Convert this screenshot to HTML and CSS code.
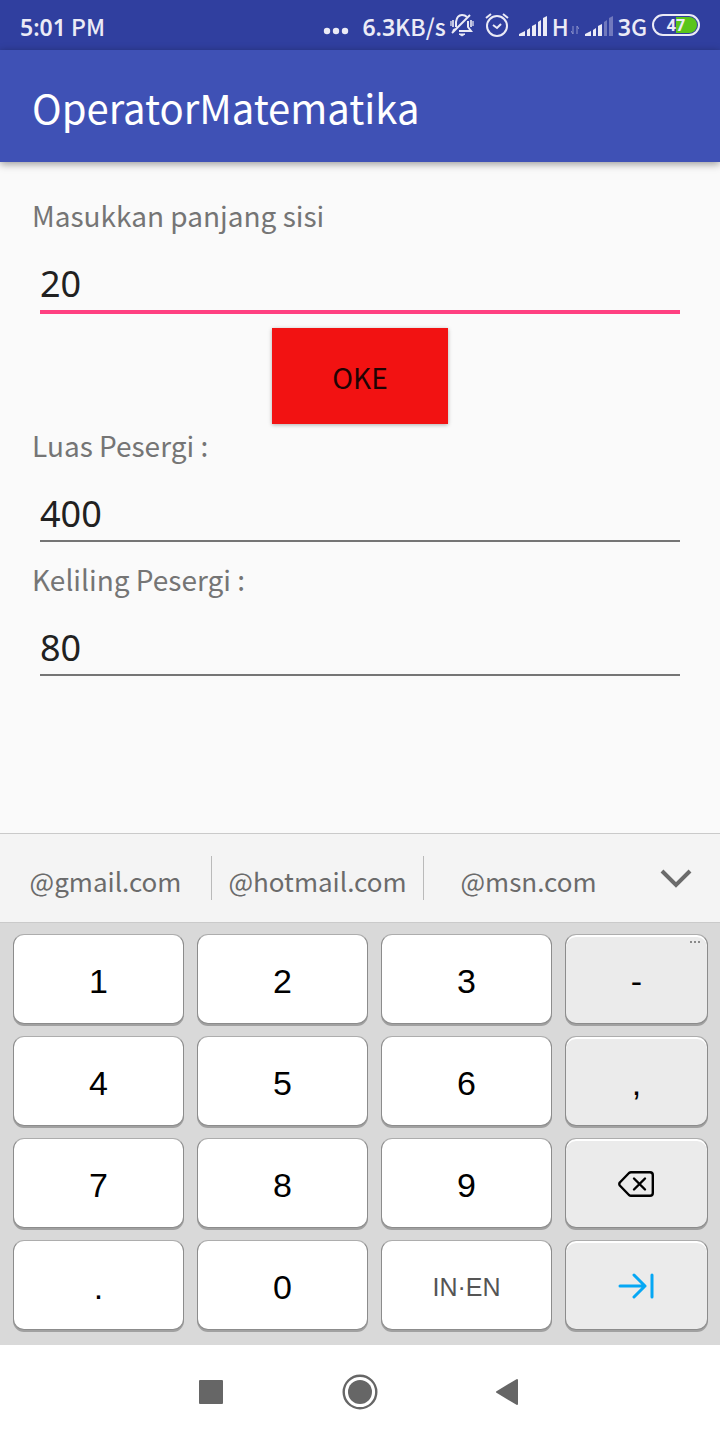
FILE: index.html
```html
<!DOCTYPE html>
<html lang="id">
<head>
<meta charset="utf-8">
<meta name="viewport" content="width=device-width, initial-scale=1">
<title>OperatorMatematika</title>
<link rel="stylesheet" href="styles.css">
</head>
<body>
<div class="screen">
  <div class="status">
    <span class="clock"><span class="digits">5:01</span> PM</span>
    <svg class="dots" width="26" height="8" viewBox="0 0 26 8" fill="#ebebf6"><circle cx="4" cy="4" r="3.2"/><circle cx="13" cy="4" r="3.2"/><circle cx="22" cy="4" r="3.2"/></svg>
    <span class="speed"><span class="digits">6.3</span>KB/s</span>
    <svg class="bell" width="24" height="24" viewBox="0 0 24 24" fill="none" stroke="#ebebf6" stroke-width="2"><path d="M6 14V9Q7 2 12 2Q15 2 17 4M18 8V14L21 18H9M3 18L5 16"/><path d="M20 2L2 20"/><path d="M9 21H15L12 23Z" fill="#ebebf6" stroke-width="1"/><path d="M3 7V14M21 7V14" stroke-width="1.6"/><path d="M1 8V13M23 8V13" stroke-width="1.2"/></svg>
    <svg class="alarm" width="24" height="24" viewBox="0 0 24 24" fill="none" stroke="#ebebf6" stroke-width="2"><circle cx="12" cy="13" r="10"/><path d="M8 12L12 15L16 11"/><path d="M1 5L6 1M23 5L18 1"/></svg>
    <svg class="signal" width="28" height="20" viewBox="0 0 28 20" fill="#ebebf6"><path d="M0 20V18L6 15V20ZM8 14L11 12V20H8ZM13 10L17 8V20H13ZM19 6L22 4V20H19ZM24 2L28 0V20H24Z"/></svg>
    <span class="net">H</span>
    <svg class="data" width="8" height="10" viewBox="0 0 8 10" fill="none" stroke="#8d94cc"><path d="M2 1V9L0 6M6 9V1L8 4"/></svg>
    <svg class="signal" width="28" height="20" viewBox="0 0 28 20" fill="#ebebf6"><path d="M0 20V18L6 15V20ZM8 14L11 12V20H8ZM13 10L17 8V20H13Z"/><path fill="#7179bd" d="M19 6L22 4V20H19ZM24 2L28 0V20H24Z"/></svg>
    <span class="net"><span class="digits">3</span>G</span>
    <span class="battery">47</span>
  </div>

  <header class="appbar"><h1>OperatorMatematika</h1></header>

  <main class="content">
    <form class="form">
      <label for="side">Masukkan panjang sisi</label>
      <input class="focused" id="side" type="text" inputmode="decimal" value="20">
      <button class="ok" type="button">OKE</button>
      <label for="area">Luas Pesergi :</label>
      <input id="area" type="text" value="400">
      <label for="perimeter">Keliling Pesergi :</label>
      <input id="perimeter" type="text" value="80">
    </form>
  </main>

  <section class="keyboard" aria-label="Keyboard">
    <div class="suggest">
      <button type="button">@gmail.com</button>
      <button type="button">@hotmail.com</button>
      <button type="button">@msn.com</button>
      <button type="button" class="hide" aria-label="Hide keyboard"><svg width="34" height="20" viewBox="0 0 34 20" fill="none" stroke="#6b6b6b" stroke-width="4"><path d="M2 2L16 16L30 2"/></svg></button>
    </div>
    <div class="keys">
      <button type="button">1</button><button type="button">2</button><button type="button">3</button>
      <button type="button" class="side">-<svg class="more" width="11" height="3" viewBox="0 0 11 3" fill="#8a8a8a"><path d="M0 0H2V2H0ZM4 0H6V2H4ZM8 0H10V2H8Z"/></svg></button>
      <button type="button">4</button><button type="button">5</button><button type="button">6</button>
      <button type="button" class="side">,</button>
      <button type="button">7</button><button type="button">8</button><button type="button">9</button>
      <button type="button" class="side" aria-label="Backspace"><svg width="38" height="26" viewBox="0 0 38 26" fill="none" stroke="#000" stroke-width="2.4" stroke-linecap="round" stroke-linejoin="round"><path d="M13 1.2H32Q34.8 1.2 34.8 4V22Q34.8 24.8 32 24.8H13Q12 24.8 11 24L1.8 14.5Q.8 13 1.8 11.5L11 2Q12 1.2 13 1.2Z"/><path d="M16 7.5L27 18.5M27 7.5L16 18.5"/></svg></button>
      <button type="button">.</button><button type="button">0</button>
      <button type="button" class="lang">IN·EN</button>
      <button type="button" class="side" aria-label="Next field"><svg width="38" height="26" viewBox="0 0 38 26" fill="none" stroke="#06a7f4" stroke-width="3" stroke-linecap="round" stroke-linejoin="round"><path d="M2 13H27M16 2L27 13L16 24M34 2V24"/></svg></button>
    </div>
  </section>

  <nav class="nav">
    <button type="button" aria-label="Recent apps"><svg width="36" height="36" viewBox="0 0 36 36" fill="#666"><rect x="6" y="6" width="24" height="24" rx="1"/></svg></button>
    <button type="button" aria-label="Home"><svg width="36" height="36" viewBox="0 0 36 36" fill="#666"><circle cx="18" cy="18" r="12"/><circle cx="18" cy="18" r="16.3" fill="none" stroke="#666" stroke-width="2.4"/></svg></button>
    <button type="button" aria-label="Back"><svg width="36" height="36" viewBox="0 0 36 36" fill="#666" stroke="#666" stroke-width="2" stroke-linejoin="round"><path d="M6 18L26 6V30Z"/></svg></button>
  </nav>
</div>
</body>
</html>
```
FILE: styles.css
```css
* { box-sizing: border-box; }
body {
  margin: 0;
  background: #fafafa;
  font-family: "Noto Sans CJK SC", sans-serif;
}
button, input { font: inherit; margin: 0; padding: 0; border: 0; border-radius: 0; background: none; }
svg { display: block; flex: none; }
.screen { min-height: 100vh; display: flex; flex-direction: column; }

.status {
  height: 50px;
  padding: 2px 20px 0;
  display: flex;
  align-items: center;
  background: #303f9f;
  color: #ebebf6;
  font-size: 23px;
  font-weight: 500;
  line-height: 32px;
  white-space: nowrap;
}
.digits { font-family: "Noto Sans", sans-serif; font-weight: 600; }
.clock { margin-right: auto; }
.dots { margin: 10px 13px 0 0; }
.speed { margin-right: 4px; }
.bell { margin: 0 11px 2px 0; }
.alarm { margin: 0 10px 2px 0; }
.signal { margin-right: 5px; }
.data { margin: 8px 6px 0 2px; }
.battery {
  width: 48px;
  height: 22px;
  margin: 0 0 2px 5px;
  padding: 1px;
  border: 2px solid #ebebf6;
  border-radius: 11px;
  background: linear-gradient(90deg, transparent 50%, #5ac51a 50%) content-box;
  font: 700 16px/16px "Noto Sans", sans-serif;
  text-align: center;
}

.appbar {
  position: relative;
  height: 112px;
  padding: 2px 32px 0;
  display: flex;
  align-items: center;
  background: #3f51b5;
  color: #fff;
  box-shadow: 0 2px 8px rgba(0, 0, 0, .4);
}
.appbar h1 { margin: 0; font-size: 40px; font-weight: 400; line-height: 60px; }

.content { flex: 1; padding: 32px; background: #fafafa; }
.form { display: flex; flex-direction: column; }
.form label { height: 44px; font-size: 28px; line-height: 42px; color: #757575; }
.form input {
  height: 74px;
  margin: 0 8px 16px;
  padding-top: 18px;
  border-bottom: 2px solid #757575;
  outline: 0;
  color: #212121;
  font: 36px/54px "Noto Sans", sans-serif;
}
.form input.focused { height: 76px; margin-bottom: 14px; border-bottom: 4px solid #ff4081; }
.ok {
  align-self: center;
  width: 176px;
  height: 96px;
  padding-top: 2px;
  background: #f21212;
  color: #1f0303;
  font-size: 28px;
  font-weight: 400;
  box-shadow: 0 1px 4px rgba(0, 0, 0, .3);
}

.keyboard { background: #d9d9d9; }
.suggest {
  height: 90px;
  display: grid;
  grid-template-columns: 212fr 212fr 209fr 87fr;
  align-items: center;
  border-top: 1px solid #cacaca;
  border-bottom: 1px solid #cacaca;
  background: #f4f4f4;
}
.suggest button {
  height: 44px;
  padding-top: 6px;
  border-right: 1px solid #bababa;
  color: #6b6b6b;
  font-size: 26px;
  line-height: 38px;
}
.suggest button:nth-child(n+3) { border-right: 0; }
.suggest .hide { padding: 2px 0 0; display: grid; justify-content: center; align-content: center; }

.keys {
  display: grid;
  grid-template-columns: 171fr 171fr 171fr 143fr;
  grid-auto-rows: 90px;
  gap: 12px 13px;
  padding: 11px 12px 15px 13px;
}
.keys button {
  position: relative;
  display: flex;
  align-items: center;
  justify-content: center;
  padding-top: 4px;
  border: 1px solid #8c8c8c;
  border-top-color: #adadad;
  border-radius: 11px;
  background: #fff;
  box-shadow: 0 2px 0 #a1a1a1;
  color: #000;
  font: 34px/40px "Liberation Sans", Arial, sans-serif;
}
.keys .side { background: #ebebeb; box-shadow: 0 2px 0 #a1a1a1, inset 0 2px 0 #fff; }
.keys .side svg { margin-bottom: 2px; }
.keys .side .more { position: absolute; top: 6px; right: 6px; margin: 0; }
.keys .lang { font-size: 25px; color: #555; }

.nav {
  height: 95px;
  padding: 0 1px 1px 0;
  display: flex;
  justify-content: center;
  align-items: center;
  gap: 113px;
  background: #fff;
}
```
